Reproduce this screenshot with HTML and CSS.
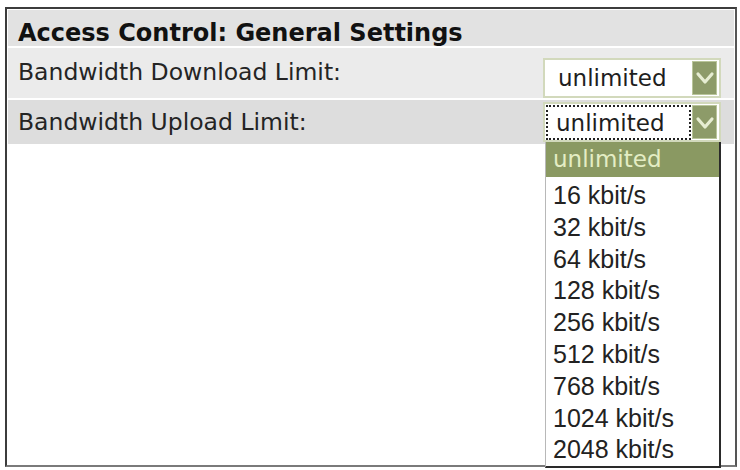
FILE: index.html
```html
<!DOCTYPE html>
<html>
<head>
<meta charset="utf-8">
<link rel="stylesheet" href="styles.css">
</head>
<body>
<div class="frame">
  <div class="head">Access Control: General Settings</div>
  <div class="row row-a">
    <span class="label">Bandwidth Download Limit:</span>
    <div class="select">
      <span class="value">unlimited</span>
      <span class="btn"><svg width="22" height="31" viewBox="0 0 22 31"><path d="M4 12 L11 20 L18 12" fill="none" stroke="#e6edd2" stroke-width="3.2" stroke-linecap="round" stroke-linejoin="round"/></svg></span>
    </div>
  </div>
  <div class="row row-b">
    <span class="label">Bandwidth Upload Limit:</span>
    <div class="select open">
      <span class="value focus">unlimited</span>
      <span class="btn"><svg width="22" height="31" viewBox="0 0 22 31"><path d="M4 12 L11 20 L18 12" fill="none" stroke="#e6edd2" stroke-width="3.2" stroke-linecap="round" stroke-linejoin="round"/></svg></span>
      <ul class="list">
        <li class="sel">unlimited</li>
        <li>16 kbit/s</li>
        <li>32 kbit/s</li>
        <li>64 kbit/s</li>
        <li>128 kbit/s</li>
        <li>256 kbit/s</li>
        <li>512 kbit/s</li>
        <li>768 kbit/s</li>
        <li>1024 kbit/s</li>
        <li>2048 kbit/s</li>
      </ul>
    </div>
  </div>
</div>
</body>
</html>
```

FILE: styles.css
```css
html, body {
  margin: 0;
  padding: 0;
  background: #ffffff;
}
body {
  width: 740px;
  height: 470px;
  overflow: hidden;
  font-family: "DejaVu Sans", Verdana, sans-serif;
}
.frame {
  box-sizing: border-box;
  margin: 7px 3px 0 5px;
  width: 732px;
  height: 460px;
  border: 2px solid #3c3c3c;
  border-bottom-color: #7a7a7a;
  border-right-color: #555555;
  padding: 1px;
  background: #ffffff;
}
.head {
  box-sizing: border-box;
  height: 36px;
  padding: 10px 0 0 10px;
  line-height: 26px;
  font-size: 24px;
  font-weight: bold;
  color: #111111;
  background: #e2e2e2;
  margin-bottom: 2px;
}
.row {
  display: flex;
  align-items: center;
  justify-content: space-between;
  padding: 0 13px 0 10px;
}
.row-a {
  height: 50px;
  background: #ebebeb;
  margin-bottom: 2px;
}
.row-b {
  height: 44px;
  background: #dddddd;
}
.label {
  font-size: 23.5px;
  color: #242424;
}
.row-a .label {
  padding-bottom: 3px;
}
.select {
  position: relative;
  box-sizing: border-box;
  width: 178px;
  height: 40px;
  border: 2px solid #d2d9bc;
  background: #ffffff;
  display: flex;
  align-items: center;
  justify-content: space-between;
  padding: 0 2px 0 1px;
}
.row-a .select {
  margin-top: 9px;
}
.row-b .select {
  margin-top: 2px;
  margin-bottom: 2px;
}
.value {
  box-sizing: border-box;
  height: 35px;
  width: 145px;
  padding-left: 10px;
  font-size: 23px;
  line-height: 33px;
  color: #1e1e1e;
  border: 2px solid transparent;
}
.value.focus {
  border: 2px dotted #222222;
  padding-left: 8px;
}
.btn {
  box-sizing: border-box;
  width: 25px;
  height: 34px;
  background: #8d9b69;
  border: 1px solid #b9c59a;
  display: flex;
  align-items: center;
  justify-content: center;
}
.btn svg {
  display: block;
}
.list {
  position: absolute;
  left: 0;
  top: 38px;
  box-sizing: border-box;
  width: 176px;
  margin: 0;
  padding: 0;
  list-style: none;
  background: #ffffff;
  border-left: 1px solid #b8b8b8;
  border-right: 2px solid #2a2a2a;
  border-bottom: 2px solid #2a2a2a;
}
.list li {
  height: 31.8px;
  line-height: 31.8px;
  padding-left: 7px;
  font-family: "Liberation Sans", Arial, sans-serif;
  font-size: 25px;
  color: #222222;
  white-space: nowrap;
}
.list li.sel {
  height: 35px;
  line-height: 35px;
  margin-bottom: 3px;
  font-family: "DejaVu Sans", Verdana, sans-serif;
  font-size: 23px;
  background: #8a9962;
  color: #e4edc4;
}
```
